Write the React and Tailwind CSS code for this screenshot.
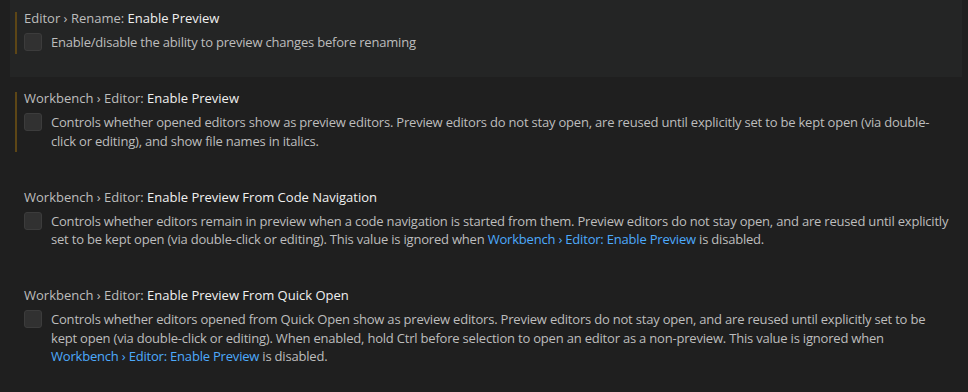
import React from "react";

const font = { fontFamily: '"Open Sans", "Noto Sans", sans-serif' };

function Link({ children }) {
  return <span className="text-[#4daafc]">{children}</span>;
}

function Item({ category, label, lines, modified, focused }) {
  return (
    <div
      className={`relative pl-[14px] pr-[14px] pt-[12px] pb-[25.5px] ${focused ? "bg-[#242525]" : ""}`}
    >
      {modified && (
        <div className="absolute left-[5px] top-[15px] bottom-[23.5px] w-[2px] bg-[#5d4616]" />
      )}
      <div className="h-[18px] leading-[18px] whitespace-nowrap">
        <span className="text-[#bdbdbd]">{category}</span>
        <span className="text-[#f0f0f0]">{label}</span>
      </div>
      <div className="mt-[6px] flex">
        <div className="w-[18px] h-[18px] shrink-0 rounded-[3px] bg-[#313131] border border-[#3c3c3c]" />
        <div className="ml-[9px] text-[#bdbdbd] leading-[18.5px] tracking-[-0.2px]">
          {lines.map((l, i) => (
            <div key={i} className="whitespace-nowrap">
              {l}
            </div>
          ))}
        </div>
      </div>
    </div>
  );
}

export default function App() {
  return (
    <div
      className="w-[968px] h-[392px] overflow-hidden bg-[#1f1f1f] text-[13px]"
      style={font}
    >
      <div className="pl-[10px] pr-[6px] -mt-[3px]">
        <Item
          focused
          modified
          category="Editor › Rename: "
          label="Enable Preview"
          lines={["Enable/disable the ability to preview changes before renaming"]}
        />
        <Item
          modified
          category="Workbench › Editor: "
          label="Enable Preview"
          lines={[
            "Controls whether opened editors show as preview editors. Preview editors do not stay open, are reused until explicitly set to be kept open (via double-",
            "click or editing), and show file names in italics.",
          ]}
        />
        <Item
          category="Workbench › Editor: "
          label="Enable Preview From Code Navigation"
          lines={[
            "Controls whether editors remain in preview when a code navigation is started from them. Preview editors do not stay open, and are reused until explicitly",
            <>
              set to be kept open (via double-click or editing). This value is ignored when{" "}
              <Link>Workbench › Editor: Enable Preview</Link> is disabled.
            </>,
          ]}
        />
        <Item
          category="Workbench › Editor: "
          label="Enable Preview From Quick Open"
          lines={[
            "Controls whether editors opened from Quick Open show as preview editors. Preview editors do not stay open, and are reused until explicitly set to be",
            "kept open (via double-click or editing). When enabled, hold Ctrl before selection to open an editor as a non-preview. This value is ignored when",
            <>
              <Link>Workbench › Editor: Enable Preview</Link> is disabled.
            </>,
          ]}
        />
      </div>
    </div>
  );
}
